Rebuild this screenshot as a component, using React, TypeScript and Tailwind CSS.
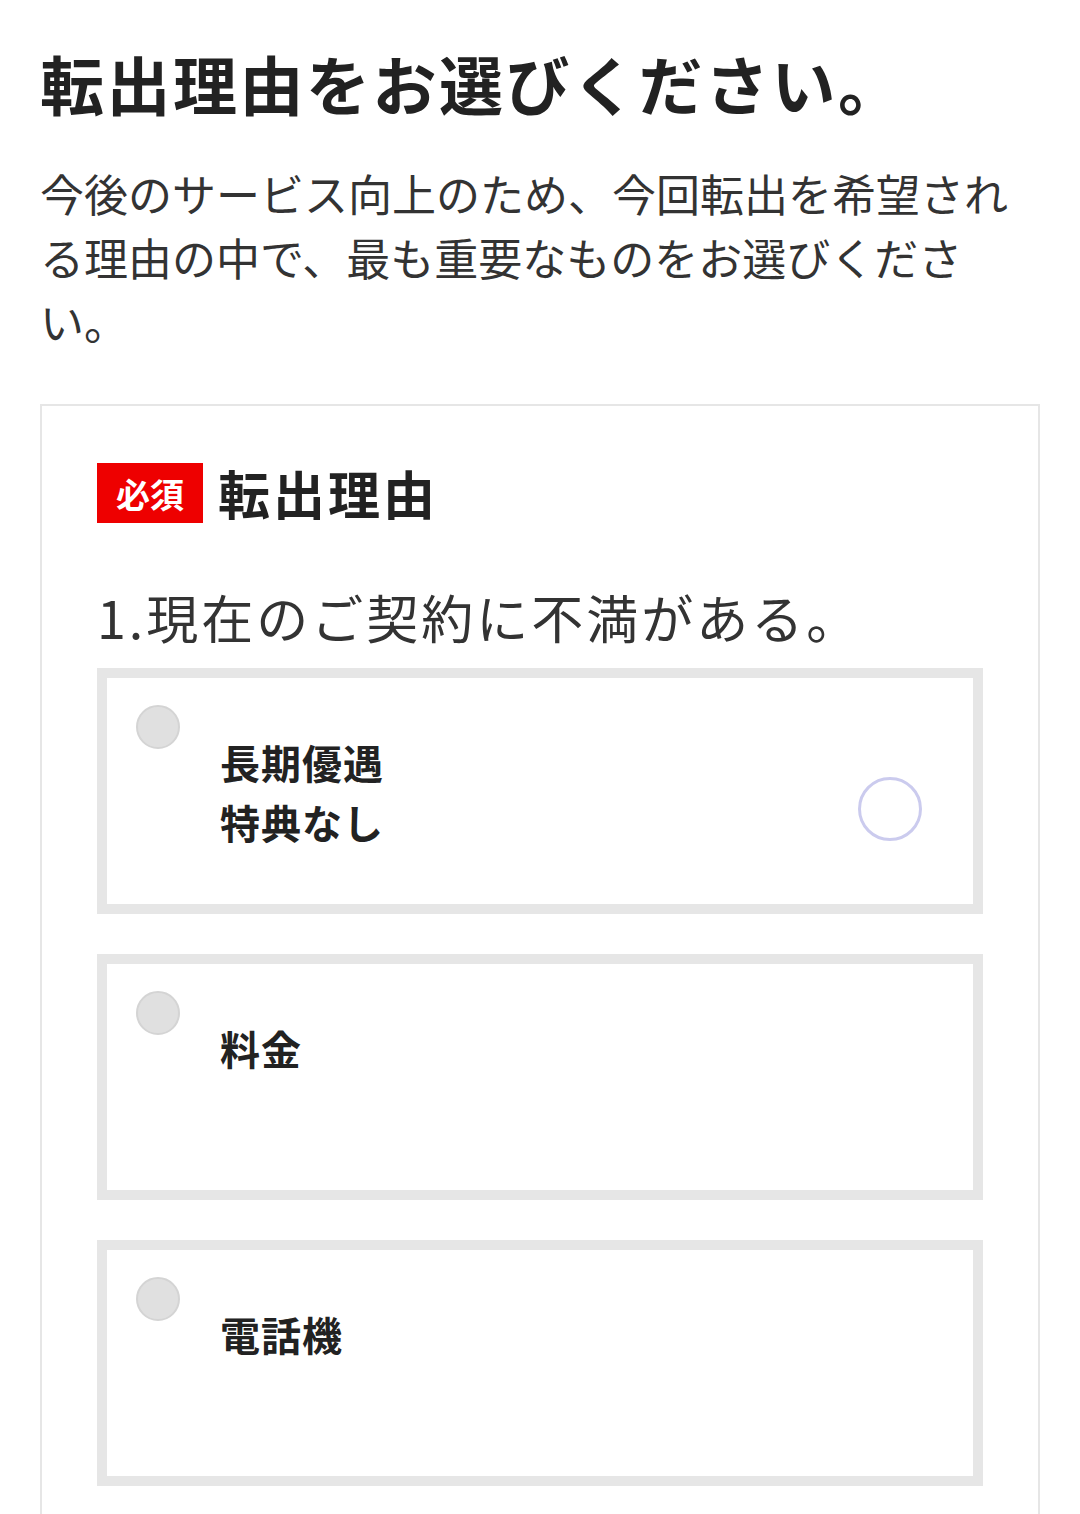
import React from "react";

const font = { fontFamily: '"Noto Sans CJK JP", "Noto Sans", sans-serif' };

function Option({ lines, ripple }: { lines: string[]; ripple?: boolean }) {
  return (
    <div className="relative h-[246px] border-[10px] border-[#e6e6e6] bg-white">
      <div className="flex flex-row">
        <div className="ml-[29px] mt-[27px] h-[44px] w-[44px] shrink-0 rounded-full border-2 border-[#d4d4d4] bg-[#e0e0e0]" />
        <div className="ml-[40px] mt-[54px] text-[40px] font-bold leading-[60px] tracking-[1px] text-[#222]">
          {lines.map((l) => (
            <div key={l}>{l}</div>
          ))}
        </div>
      </div>
      {ripple && (
        <div className="absolute left-[751px] top-[99px] h-[64px] w-[64px] rounded-full border-[3px] border-[#cbcbee]" />
      )}
    </div>
  );
}

export default function App() {
  return (
    <div className="min-h-[1514px] w-[1080px] overflow-hidden bg-white px-[40px] pt-[34px]" style={font}>
      <h1 className="text-[64px] font-bold leading-[96px] tracking-[2.5px] text-[#222]">
        転出理由をお選びください。
      </h1>
      <p className="mt-[31px] text-[44px] leading-[64px] text-[#333]">
        今後のサービス向上のため、今回転出を希望される理由の中で、最も重要なものをお選びください。
      </p>
      <div className="mt-[51px] border-2 border-[#e6e6e6] px-[55px] pt-[57px] pb-[60px]">
        <div className="flex flex-row items-center">
          <span className="flex h-[60px] w-[106px] items-center justify-center bg-[#ee0000] text-[34px] font-bold text-white">
            必須
          </span>
          <span className="ml-[15px] text-[52px] font-bold leading-[60px] tracking-[3px] text-[#222]">転出理由</span>
        </div>
        <div className="mt-[55px] text-[52px] leading-[78px] tracking-[3px] text-[#333]">1.現在のご契約に不満がある。</div>
        <div className="mt-[12px] flex flex-col gap-[40px]">
          <Option lines={["長期優遇", "特典なし"]} ripple />
          <Option lines={["料金"]} />
          <Option lines={["電話機"]} />
        </div>
      </div>
    </div>
  );
}
